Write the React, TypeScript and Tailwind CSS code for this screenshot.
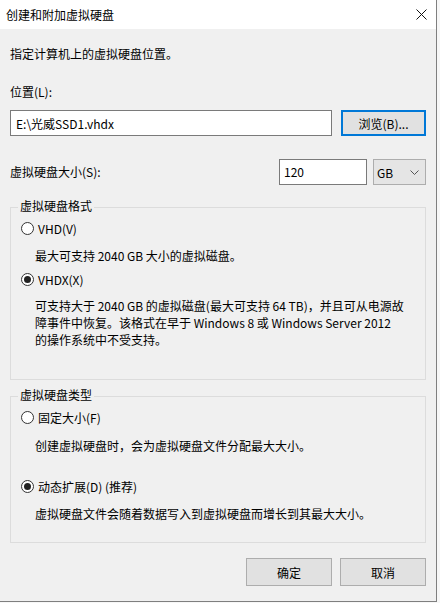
import React from 'react';

const font = { fontFamily: '"Noto Sans CJK SC", "Noto Sans", sans-serif' };

const Radio: React.FC<{ checked?: boolean; label: string }> = ({ checked, label }) => (
  <div className="flex items-center h-[17px] ml-[10px]">
    <span className="w-[13px] h-[13px] rounded-full border border-[#333] bg-white flex items-center justify-center">
      {checked && <span className="w-[7px] h-[7px] rounded-full bg-[#222]" />}
    </span>
    <span className="ml-[4px]">{label}</span>
  </div>
);

const Button: React.FC<{ label: string; focused?: boolean; className?: string }> = ({ label, focused, className = '' }) => (
  <button
    className={`bg-[#e1e1e1] flex items-center justify-center text-[12px] text-black ${
      focused ? 'border-2 border-[#0078d7]' : 'border border-[#adadad]'
    } ${className}`}
  >
    {label}
  </button>
);

export default function App() {
  return (
    <div className="min-h-[603px] bg-[#f7f7f7] text-[12px] leading-[17px] text-black" style={font}>
      <div className="w-[437px] h-[602px] border-r border-b border-[#7f7f7f] flex flex-col">
        {/* Title bar */}
        <div className="h-[29px] bg-white flex items-center justify-between pl-[6px] pr-[10px] shrink-0">
          <span className="text-[12px]">创建和附加虚拟硬盘</span>
          <svg width="11" height="11" viewBox="0 0 11 11" className="mr-[-1px]">
            <path d="M0.5 0.5 L10.5 10.5 M10.5 0.5 L0.5 10.5" stroke="#111" strokeWidth="1" />
          </svg>
        </div>

        {/* Body */}
        <div className="flex-1 bg-[#f0f0f0] px-[10px] pt-[16px]">
          <div>指定计算机上的虚拟硬盘位置。</div>

          <div className="mt-[21px]">位置(L):</div>
          <div className="flex mt-[10px] gap-[9px]">
            <div className="w-[322px] h-[26px] border border-[#7a7a7a] bg-white flex items-center pl-[5px]">
              E:\光威SSD1.vhdx
            </div>
            <Button label="浏览(B)..." focused className="w-[85px] h-[26px]" />
          </div>

          <div className="flex items-center mt-[23px] h-[26px]">
            <span className="flex-1 -mt-[2px]">虚拟硬盘大小(S):</span>
            <div className="w-[88px] h-[26px] border border-[#7a7a7a] bg-white flex items-center pl-[4px] pb-[2px]">120</div>
            <div className="w-[53px] h-[26px] ml-[6px] border border-[#adadad] bg-[#e5e5e5] flex items-center justify-between pl-[3px] pr-[6px]">
              <span>GB</span>
              <svg width="9" height="5" viewBox="0 0 9 5">
                <path d="M0.5 0.5 L4.5 4.5 L8.5 0.5" stroke="#555" strokeWidth="1" fill="none" />
              </svg>
            </div>
          </div>

          <fieldset className="mt-[12px] border border-[#dcdcdc] pb-[31px]">
            <legend className="ml-[7px] px-[2px] pb-[4px]">虚拟硬盘格式</legend>
            <div className="mt-[2px]">
              <Radio label="VHD(V)" />
            </div>
            <div className="mt-[10px] pl-[24px]">最大可支持 2040 GB 大小的虚拟磁盘。</div>
            <div className="mt-[7px]">
              <Radio checked label="VHDX(X)" />
            </div>
            <div className="mt-[9px] pl-[24px] pr-[8px] whitespace-nowrap">
              可支持大于 2040 GB 的虚拟磁盘(最大可支持 64 TB)，并且可从电源故
              <br />
              障事件中恢复。该格式在早于 Windows 8 或 Windows Server 2012
              <br />
              的操作系统中不受支持。
            </div>
          </fieldset>

          <fieldset className="mt-[6px] border border-[#dcdcdc] pb-[20px]">
            <legend className="ml-[7px] px-[2px] pb-[4px]">虚拟硬盘类型</legend>
            <div className="mt-[2px]">
              <Radio label="固定大小(F)" />
            </div>
            <div className="mt-[11px] pl-[24px]">创建虚拟硬盘时，会为虚拟硬盘文件分配最大大小。</div>
            <div className="mt-[24px]">
              <Radio checked label="动态扩展(D) (推荐)" />
            </div>
            <div className="mt-[10px] pl-[24px]">虚拟硬盘文件会随着数据写入到虚拟硬盘而增长到其最大大小。</div>
          </fieldset>

          <div className="flex justify-end gap-[8px] mt-[15px]">
            <Button label="确定" className="w-[86px] h-[28px]" />
            <Button label="取消" className="w-[86px] h-[28px]" />
          </div>
        </div>
      </div>
    </div>
  );
}
